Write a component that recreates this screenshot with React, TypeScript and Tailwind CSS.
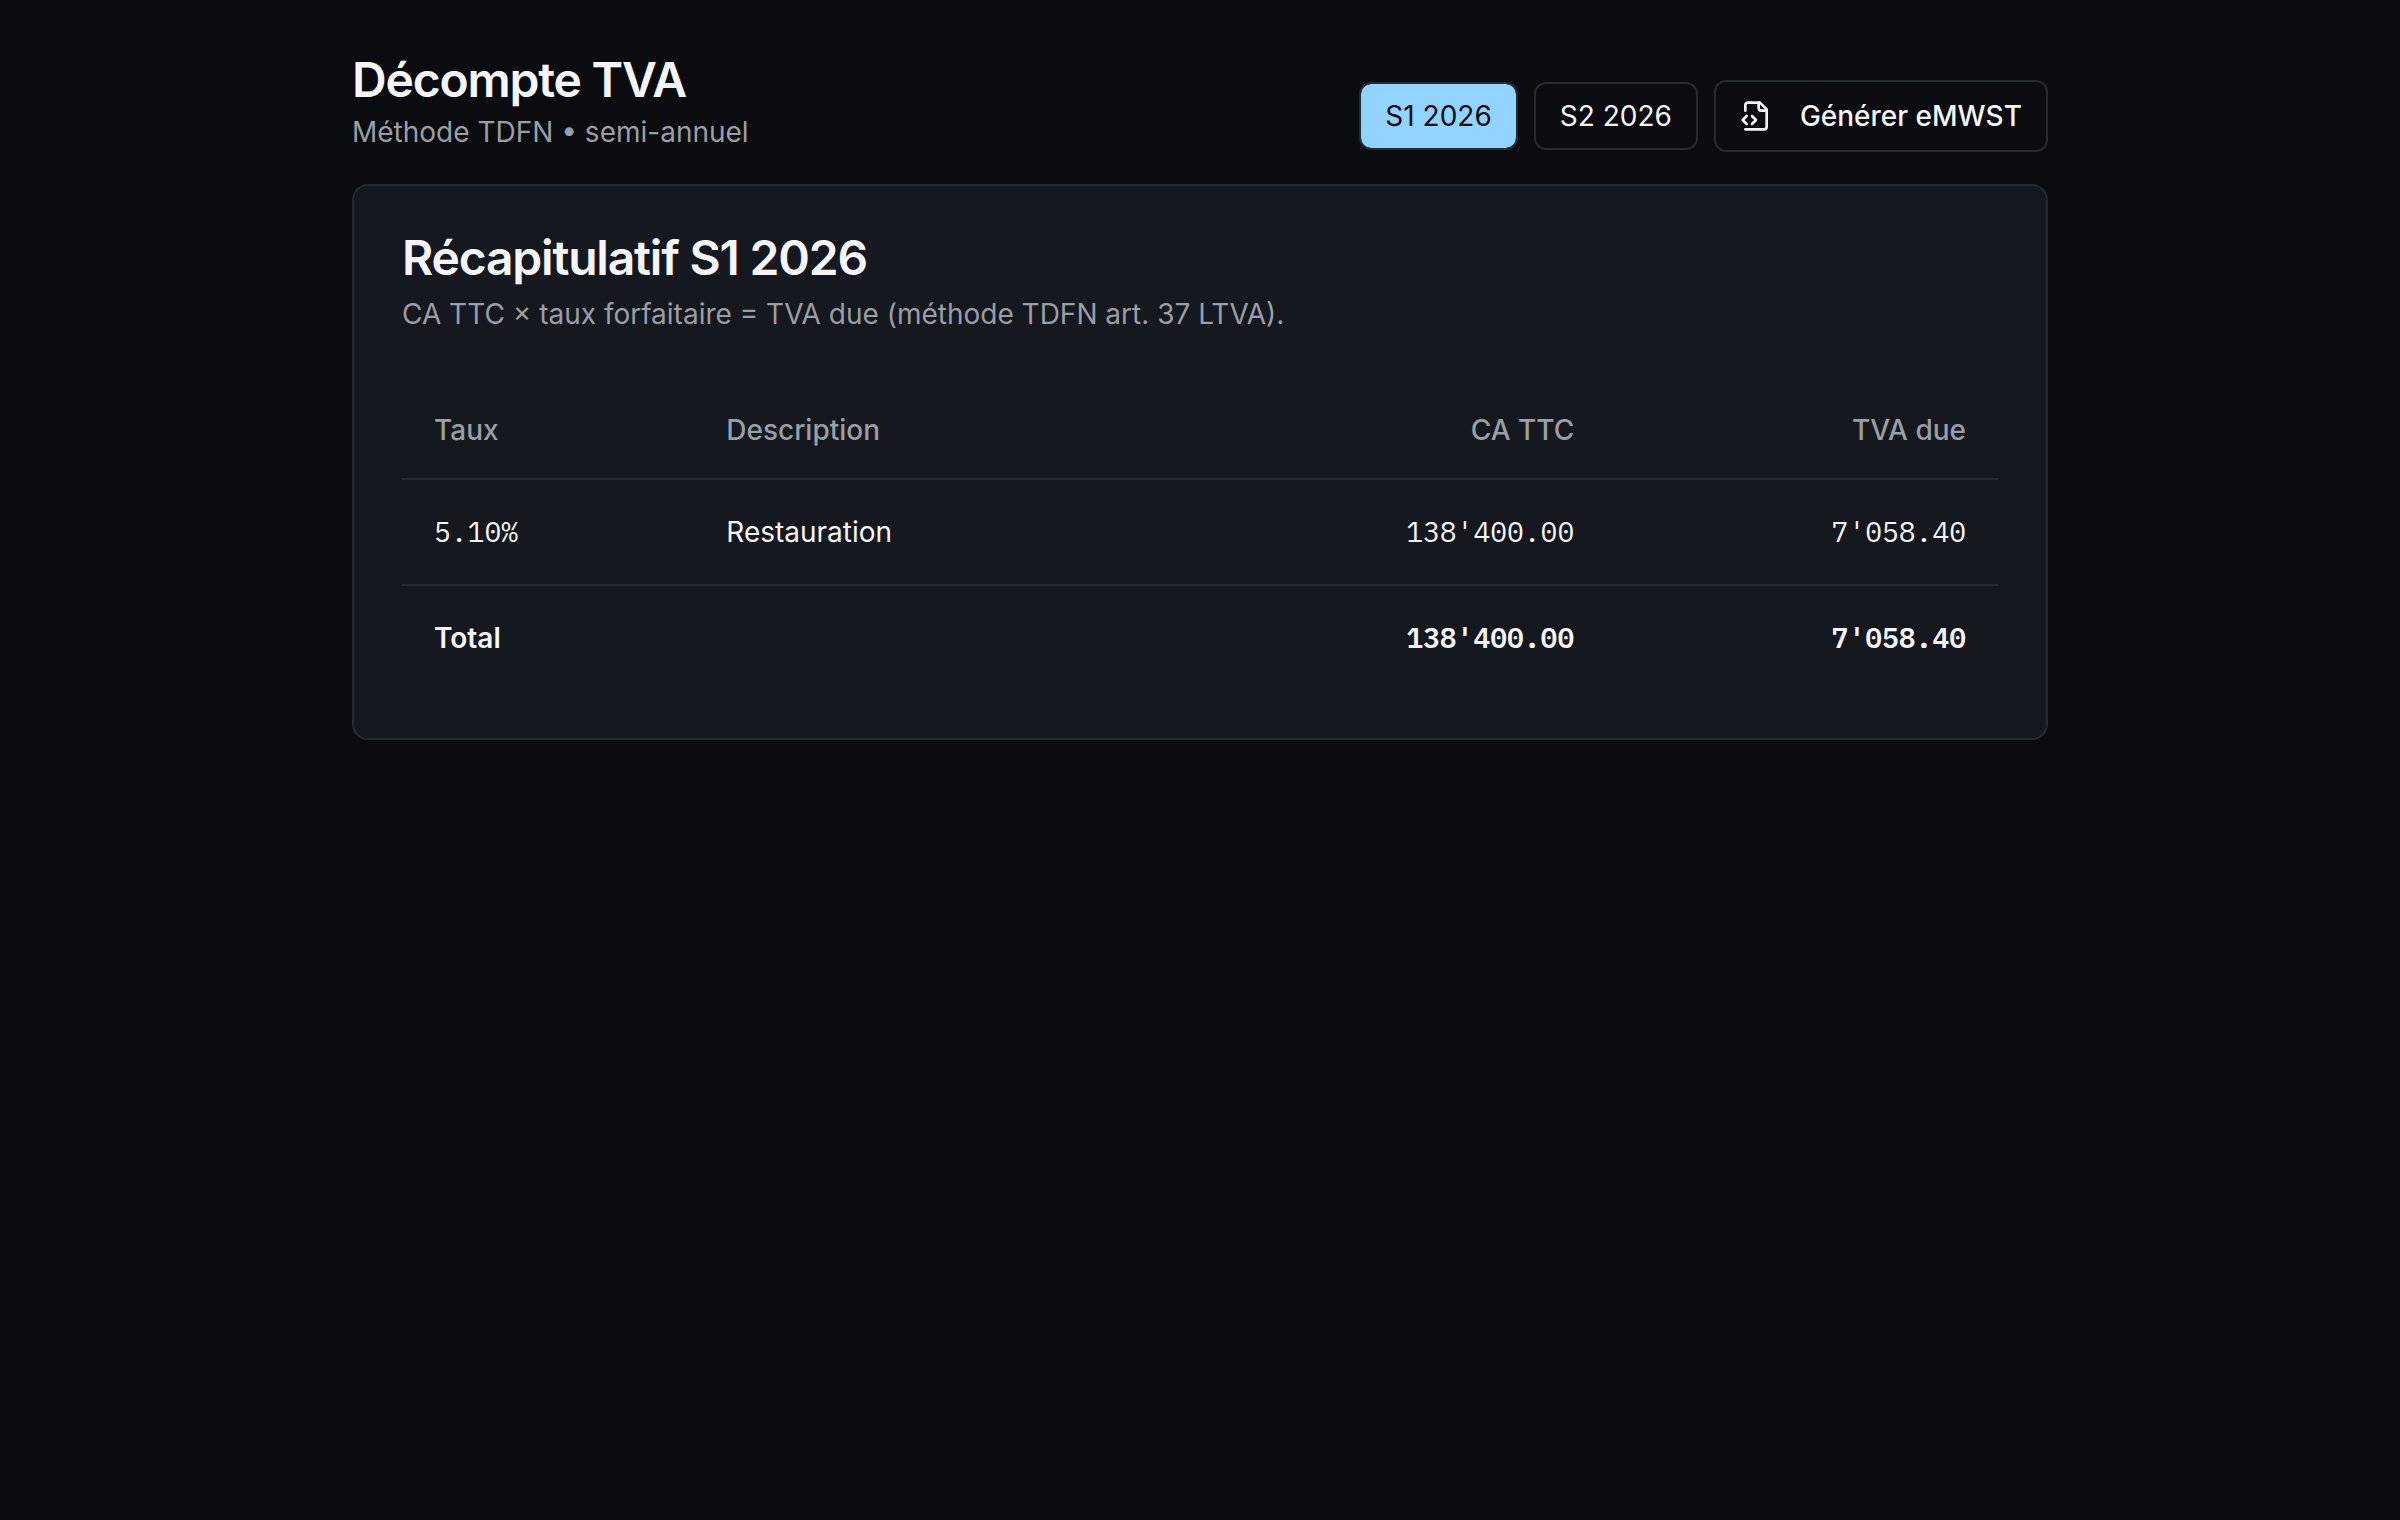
import { useState } from "react";
import clsx from "clsx";

type Line = { rate: string; description: string; turnover: string; vat: string };

const SEMESTERS = ["S1 2026", "S2 2026"];

const LINES: Line[] = [
  { rate: "5.10%", description: "Restauration", turnover: "138'400.00", vat: "7'058.40" },
];

const MONO = "font-['IBM_Plex_Mono','Liberation_Mono',monospace]";

function FileCodeIcon({ className }: { className?: string }) {
  return (
    <svg
      viewBox="0 0 24 24"
      fill="none"
      stroke="currentColor"
      strokeWidth="2"
      strokeLinecap="round"
      strokeLinejoin="round"
      aria-hidden="true"
      className={className}
    >
      <path d="M4 22h14a2 2 0 0 0 2-2V7l-5-5H6a2 2 0 0 0-2 2v4" />
      <path d="M14 2v4a2 2 0 0 0 2 2h4" />
      <path d="m5 12-3 3 3 3" />
      <path d="m9 18 3-3-3-3" />
    </svg>
  );
}

export default function App() {
  const [semester, setSemester] = useState("S1 2026");

  return (
    <div className="min-h-screen bg-[#0a0c10] font-['Inter',sans-serif] text-[28px] leading-10 text-[#f4f5f8] antialiased">
      <main className="mx-auto flex max-w-[1792px] flex-col gap-8 p-12">
        <header className="flex flex-wrap items-end justify-between gap-8">
          <div>
            <h1 className="text-5xl leading-16 font-semibold tracking-tight">Décompte TVA</h1>
            <p className="text-[#9a9ea6]">Méthode TDFN • semi-annuel</p>
          </div>
          <div className="flex items-center gap-4">
            {SEMESTERS.map((s) => (
              <button
                key={s}
                type="button"
                onClick={() => setSemester(s)}
                className={clsx(
                  "rounded-xl border-2 border-[#262b2f] bg-clip-padding px-6 py-3",
                  s === semester && "bg-[#93d3ff] text-[#0a0c10]",
                )}
              >
                {s}
              </button>
            ))}
            <button
              type="button"
              className="flex h-18 items-center rounded-xl border-2 border-[#262b2f] px-6 font-medium"
            >
              <FileCodeIcon className="mr-7 size-8" />
              Générer eMWST
            </button>
          </div>
        </header>

        <section className="rounded-2xl border-2 border-[#262b2f] bg-[#15181f] p-12">
          <div className="mb-12 flex flex-col gap-3">
            <h2 className="text-5xl leading-12 font-semibold tracking-tight">
              Récapitulatif {semester}
            </h2>
            <p className="text-[#9a9ea6]">
              CA TTC × taux forfaitaire = TVA due (méthode TDFN art. 37 LTVA).
            </p>
          </div>

          <table className="w-full">
            <thead>
              <tr className="h-[97px] border-b-2 border-[#262b2f] text-[#9a9ea6]">
                <th className="px-8 text-left font-medium">Taux</th>
                <th className="px-8 text-left font-medium">Description</th>
                <th className="px-8 text-right font-medium">CA TTC</th>
                <th className="px-8 text-right font-medium">TVA due</th>
              </tr>
            </thead>
            <tbody>
              {LINES.map((line) => (
                <tr key={line.rate} className="border-b-2 border-[#262b2f]">
                  <td className={clsx("p-8", MONO)}>{line.rate}</td>
                  <td className="p-8">{line.description}</td>
                  <td className={clsx("p-8 text-right", MONO)}>{line.turnover}</td>
                  <td className={clsx("p-8 text-right", MONO)}>{line.vat}</td>
                </tr>
              ))}
              <tr className="font-semibold">
                <td className="p-8" colSpan={2}>
                  Total
                </td>
                <td className={clsx("p-8 text-right", MONO)}>138'400.00</td>
                <td className={clsx("p-8 text-right", MONO)}>7'058.40</td>
              </tr>
            </tbody>
          </table>
        </section>
      </main>
    </div>
  );
}
